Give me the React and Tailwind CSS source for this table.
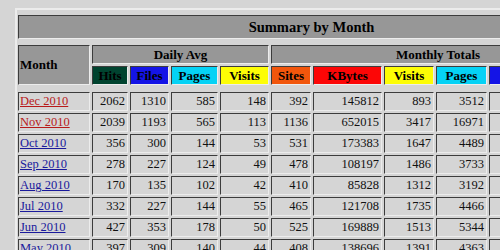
import React from 'react';

const cols = 'grid grid-cols-[72px_36px_39px_47px_49px_40px_69px_50px_51px_51px_63px] gap-[2px]';
const cell = 'h-[19px] border border-t-[#3c3c3c] border-l-[#3c3c3c] border-r-[#ececec] border-b-[#ececec]';

const rows = [
  ['Dec 2010', true, 2062, 1310, 585, 148, 392, 145812, 893, 3512, 7860, 12372],
  ['Nov 2010', true, 2039, 1193, 565, 113, 1136, 652015, 3417, 16971, 35790, 61170],
  ['Oct 2010', false, 356, 300, 144, 53, 531, 173383, 1647, 4489, 9300, 11036],
  ['Sep 2010', false, 278, 227, 124, 49, 478, 108197, 1486, 3733, 6810, 8340],
  ['Aug 2010', false, 170, 135, 102, 42, 410, 85828, 1312, 3192, 4185, 5270],
  ['Jul 2010', false, 332, 227, 144, 55, 465, 121708, 1735, 4466, 7037, 10292],
  ['Jun 2010', false, 427, 353, 178, 50, 525, 169889, 1513, 5344, 10590, 12810],
  ['May 2010', false, 397, 309, 140, 44, 408, 138696, 1391, 4363, 9579, 12307],
  ['Apr 2010', false, 412, 318, 151, 47, 439, 140211, 1402, 4530, 9540, 12360],
];

const heads = [
  ['Hits', 'bg-[#00432f]'],
  ['Files', 'bg-[#1414e6]'],
  ['Pages', 'bg-[#05d2f5]'],
  ['Visits', 'bg-[#fdfd05]'],
  ['Sites', 'bg-[#f2560c]'],
  ['KBytes', 'bg-[#fc0606]'],
  ['Visits', 'bg-[#fdfd05]'],
  ['Pages', 'bg-[#05d2f5]'],
  ['Files', 'bg-[#1414e6]'],
  ['Hits', 'bg-[#00432f]'],
];

export default function App() {
  return (
    <div className="w-[500px] h-[250px] overflow-hidden bg-[#d5d5d5] pt-[8px] pl-[15px] font-['Liberation_Serif',serif] text-[#111]">
      <div className="w-fit border-2 border-t-[#ececec] border-l-[#ececec] border-r-[#7a7a7a] border-b-[#7a7a7a] pt-[5px] px-[1px]">
        <div className="h-[24px] flex items-center justify-center bg-[#979797] border border-t-[#3c3c3c] border-l-[#3c3c3c] border-r-[#ececec] border-b-[#ececec] text-[14.5px] font-bold text-black pt-[1px]">
          Summary by Month
        </div>

        <div className={`${cols} mt-[6px] grid-rows-[19px_19px]`}>
          <div className={`${cell} h-auto row-span-2 bg-[#979797] flex items-center pl-[1px] text-[13px] font-bold text-black`}>
            Month
          </div>
          <div className={`${cell} col-span-4 bg-[#979797] flex items-center justify-center text-[13px] font-bold text-black`}>
            Daily Avg
          </div>
          <div className={`${cell} col-span-6 bg-[#979797] flex items-center justify-center text-[13px] font-bold text-black`}>
            Monthly Totals
          </div>
          {heads.map(([label, bg], i) => (
            <div key={i} className={`${cell} ${bg} flex items-center justify-center text-[13px] font-bold`}>
              <span className="text-[#000000]">{label}</span>
            </div>
          ))}
        </div>

        <div className={`${cols} mt-[7px]`}>
          {rows.map(([month, recent, ...nums]) => (
            <React.Fragment key={month}>
              <div className={`${cell} flex items-center pl-[1px] text-[12.5px]`}>
                <a
                  href="#"
                  className={`underline ${recent ? 'text-[#b81a1a]' : 'text-[#1a1a9c]'}`}
                >
                  {month}
                </a>
              </div>
              {nums.map((n, i) => (
                <div key={i} className={`${cell} flex items-center justify-end pr-[2px] text-[12.5px]`}>
                  {n}
                </div>
              ))}
            </React.Fragment>
          ))}
        </div>
      </div>
    </div>
  );
}
